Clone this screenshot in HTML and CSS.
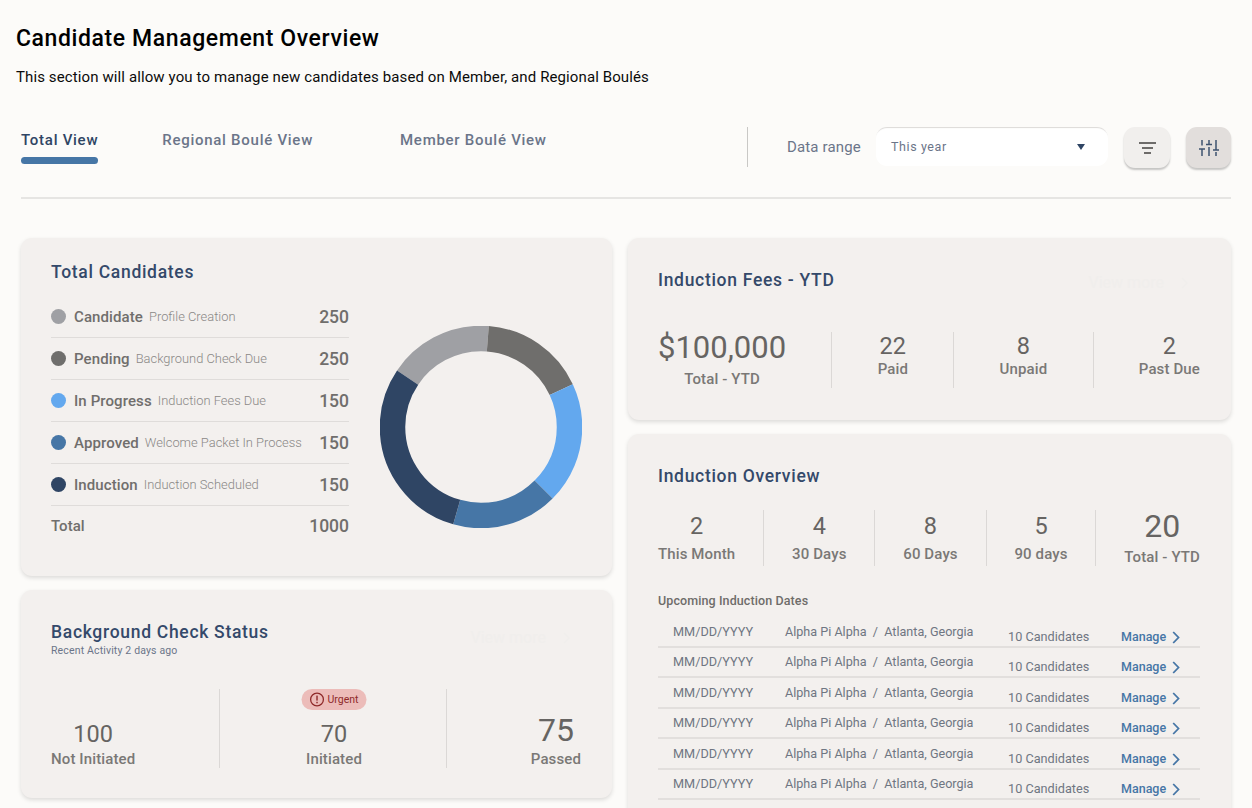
FILE: index.html
```html
<!DOCTYPE html>
<html lang="en">
<head>
<meta charset="utf-8">
<title>Candidate Management Overview</title>
<link rel="stylesheet" href="styles.css">
</head>
<body>
<main class="page">
  <header class="head">
    <h1>Candidate Management Overview</h1>
    <p>This section will allow you to manage new candidates based on Member, and Regional Boulés</p>
  </header>
  <nav class="toolbar">
    <div class="tabs">
      <a class="tab tab-active">Total View</a>
      <a class="tab tab-regional">Regional Boulé View</a>
      <a class="tab tab-member">Member Boulé View</a>
    </div>
    <div class="controls">
      <span class="range-label">Data range</span>
      <div class="select"><span>This year</span>
        <svg width="8" height="6" viewBox="0 0 8 6"><polygon points="0,0 8,0 4,6" fill="#2f4564"/></svg>
      </div>
      <button class="icon-btn">
        <svg width="17" height="14" viewBox="0 0 17 14"><g stroke="#6e6c6a" stroke-width="2"><line x1="0" y1="2" x2="17" y2="2"/><line x1="3" y1="7" x2="14" y2="7"/><line x1="5" y1="12" x2="12" y2="12"/></g></svg>
      </button>
      <button class="icon-btn icon-btn-on">
        <svg width="20" height="16" viewBox="0 0 20 16"><g stroke="#3d526f" stroke-width="1.5" fill="none"><line x1="3" y1="0" x2="3" y2="5.5"/><line x1="0" y1="9" x2="6" y2="9"/><line x1="3" y1="9" x2="3" y2="16"/><line x1="10" y1="0" x2="10" y2="4.5"/><line x1="7" y1="4.5" x2="13" y2="4.5"/><line x1="10" y1="7" x2="10" y2="16"/><line x1="17" y1="0" x2="17" y2="10"/><line x1="14" y1="10" x2="20" y2="10"/><line x1="17" y1="12" x2="17" y2="16"/></g></svg>
      </button>
    </div>
  </nav>

  <div class="grid">
    <div class="col">
      <section class="card card-total">
        <h2>Total Candidates</h2>
        <div class="total-body">
          <div class="legend">
            <div class="legend-row"><i class="dot c-gray"></i><b>Candidate</b><span>Profile Creation</span><em>250</em></div>
            <div class="legend-row"><i class="dot c-dark"></i><b>Pending</b><span>Background Check Due</span><em>250</em></div>
            <div class="legend-row"><i class="dot c-light"></i><b>In Progress</b><span>Induction Fees Due</span><em>150</em></div>
            <div class="legend-row"><i class="dot c-blue"></i><b>Approved</b><span>Welcome Packet In Process</span><em>150</em></div>
            <div class="legend-row"><i class="dot c-navy"></i><b>Induction</b><span>Induction Scheduled</span><em>150</em></div>
            <div class="legend-row legend-total"><strong>Total</strong><em>1000</em></div>
          </div>
          <svg class="donut" width="202" height="202" viewBox="0 0 202 202">
            <g fill="none" stroke-width="25.5" transform="rotate(-90 101 101)">
              <circle cx="101" cy="101" r="88.5" pathLength="360" stroke="#9fa0a4" stroke-dasharray="60.5 299.5" stroke-dashoffset="-304"/>
              <circle cx="101" cy="101" r="88.5" pathLength="360" stroke="#6f6e6c" stroke-dasharray="60.5 299.5" stroke-dashoffset="-4.5"/>
              <circle cx="101" cy="101" r="88.5" pathLength="360" stroke="#63a8ee" stroke-dasharray="70 290" stroke-dashoffset="-65"/>
              <circle cx="101" cy="101" r="88.5" pathLength="360" stroke="#4676a6" stroke-dasharray="61 299" stroke-dashoffset="-135"/>
              <circle cx="101" cy="101" r="88.5" pathLength="360" stroke="#2f4564" stroke-dasharray="108 252" stroke-dashoffset="-196"/>
            </g>
          </svg>
        </div>
      </section>

      <section class="card card-bg">
        <div class="title-row">
          <div>
            <h2>Background Check Status</h2>
            <p class="recent">Recent Activity <span>2 days ago</span></p>
          </div>
          <a class="ghost">View more <svg width="7" height="12" viewBox="0 0 7 12"><path d="M1 1l5 5-5 5" fill="none" stroke="currentColor" stroke-width="1.5"/></svg></a>
        </div>
        <div class="stats stats-bg">
          <div class="stat"><strong class="num">100</strong><span class="lab">Not Initiated</span></div>
          <i class="vr"></i>
          <div class="stat stat-flag">
            <span class="badge">
              <svg width="15" height="15" viewBox="0 0 15 15"><circle cx="7.5" cy="7.5" r="6.4" fill="none" stroke="#8f2a2a" stroke-width="1.3"/><rect x="6.8" y="3.6" width="1.4" height="5" fill="#8f2a2a"/><rect x="6.8" y="9.8" width="1.4" height="1.5" fill="#8f2a2a"/></svg>
              Urgent</span>
            <strong class="num">70</strong><span class="lab">Initiated</span>
          </div>
          <i class="vr"></i>
          <div class="stat"><strong class="num num-lg">75</strong><span class="lab">Passed</span></div>
        </div>
      </section>
    </div>

    <div class="col">
      <section class="card card-fees">
        <div class="title-row">
          <h2>Induction Fees - YTD</h2>
          <a class="ghost">View more <svg width="7" height="12" viewBox="0 0 7 12"><path d="M1 1l5 5-5 5" fill="none" stroke="currentColor" stroke-width="1.5"/></svg></a>
        </div>
        <div class="stats stats-fees">
          <div class="stat stat-money"><strong class="num num-lg">$100,000</strong><span class="lab">Total - YTD</span></div>
          <i class="vr"></i>
          <div class="stat"><strong class="num">22</strong><span class="lab">Paid</span></div>
          <i class="vr"></i>
          <div class="stat"><strong class="num">8</strong><span class="lab">Unpaid</span></div>
          <i class="vr"></i>
          <div class="stat"><strong class="num">2</strong><span class="lab">Past Due</span></div>
        </div>
      </section>

      <section class="card card-over">
        <h2>Induction Overview</h2>
        <div class="stats stats-over">
          <div class="stat"><strong class="num">2</strong><span class="lab">This Month</span></div>
          <i class="vr"></i>
          <div class="stat"><strong class="num">4</strong><span class="lab">30 Days</span></div>
          <i class="vr"></i>
          <div class="stat"><strong class="num">8</strong><span class="lab">60 Days</span></div>
          <i class="vr"></i>
          <div class="stat"><strong class="num">5</strong><span class="lab">90 days</span></div>
          <i class="vr"></i>
          <div class="stat stat-ytd"><strong class="num num-lg">20</strong><span class="lab">Total - YTD</span></div>
        </div>
        <h3>Upcoming Induction Dates</h3>
        <div class="dates">
          <div class="date-row"><span class="d-date">MM/DD/YYYY</span><span class="d-place">Alpha Pi Alpha&nbsp; /&nbsp; Atlanta, Georgia</span><span class="d-count">10 Candidates</span><a class="d-link">Manage <svg width="8" height="13" viewBox="0 0 8 13"><path d="M1.2 1l5.3 5.5-5.3 5.5" fill="none" stroke="#4676a6" stroke-width="1.8"/></svg></a></div>
          <div class="date-row"><span class="d-date">MM/DD/YYYY</span><span class="d-place">Alpha Pi Alpha&nbsp; /&nbsp; Atlanta, Georgia</span><span class="d-count">10 Candidates</span><a class="d-link">Manage <svg width="8" height="13" viewBox="0 0 8 13"><path d="M1.2 1l5.3 5.5-5.3 5.5" fill="none" stroke="#4676a6" stroke-width="1.8"/></svg></a></div>
          <div class="date-row"><span class="d-date">MM/DD/YYYY</span><span class="d-place">Alpha Pi Alpha&nbsp; /&nbsp; Atlanta, Georgia</span><span class="d-count">10 Candidates</span><a class="d-link">Manage <svg width="8" height="13" viewBox="0 0 8 13"><path d="M1.2 1l5.3 5.5-5.3 5.5" fill="none" stroke="#4676a6" stroke-width="1.8"/></svg></a></div>
          <div class="date-row"><span class="d-date">MM/DD/YYYY</span><span class="d-place">Alpha Pi Alpha&nbsp; /&nbsp; Atlanta, Georgia</span><span class="d-count">10 Candidates</span><a class="d-link">Manage <svg width="8" height="13" viewBox="0 0 8 13"><path d="M1.2 1l5.3 5.5-5.3 5.5" fill="none" stroke="#4676a6" stroke-width="1.8"/></svg></a></div>
          <div class="date-row"><span class="d-date">MM/DD/YYYY</span><span class="d-place">Alpha Pi Alpha&nbsp; /&nbsp; Atlanta, Georgia</span><span class="d-count">10 Candidates</span><a class="d-link">Manage <svg width="8" height="13" viewBox="0 0 8 13"><path d="M1.2 1l5.3 5.5-5.3 5.5" fill="none" stroke="#4676a6" stroke-width="1.8"/></svg></a></div>
          <div class="date-row"><span class="d-date">MM/DD/YYYY</span><span class="d-place">Alpha Pi Alpha&nbsp; /&nbsp; Atlanta, Georgia</span><span class="d-count">10 Candidates</span><a class="d-link">Manage <svg width="8" height="13" viewBox="0 0 8 13"><path d="M1.2 1l5.3 5.5-5.3 5.5" fill="none" stroke="#4676a6" stroke-width="1.8"/></svg></a></div>
        </div>
      </section>
    </div>
  </div>
</main>
</body>
</html>
```

FILE: styles.css
```css
* { box-sizing: border-box; }
html, body { margin: 0; height: 808px; overflow: hidden; }
body { background: #fcfbf9; font-family: Roboto, "Liberation Sans", sans-serif; color: #6e6c6a; }
h1, h2, h3, p { margin: 0; }

.page { padding: 25px 21px 0; }

.head { margin-left: -5px; }
.head h1 { font-size: 23px; line-height: 28px; font-weight: 500; letter-spacing: .6px; color: #000; }
.head p { margin-top: 15px; font-size: 15px; line-height: 18px; letter-spacing: .11px; color: #0b0b0b; }

.toolbar { display: flex; margin-top: 41px; height: 72px; border-bottom: 2px solid #e6e5e3; }
.tabs { display: flex; width: 727px; height: 40px; border-right: 1px solid #c9c8c6; }
.tab { display: block; height: 37px; font-size: 15px; line-height: 26px; font-weight: 500; letter-spacing: .73px; color: #6b7589; white-space: nowrap; }
.tab-active { color: #2f4564; position: relative; }
.tab-active::after { content: ""; position: absolute; left: 0; right: 0; bottom: 0; height: 7px; border-radius: 4px; background: #4676a6; }
.tab-regional { margin-left: 64px; }
.tab-member { margin-left: 87px; }

.controls { display: flex; align-items: flex-start; flex: 1; padding-left: 39px; }
.range-label { font-size: 15px; line-height: 40px; letter-spacing: .15px; color: #6b7589; width: 89px; white-space: nowrap; }
.select { display: flex; align-items: center; justify-content: space-between; width: 232px; height: 39px; padding: 0 23px 0 15px; background: #fff; border-radius: 11px; box-shadow: inset 0 2px 1px -1px #dcdad8; font-size: 12.5px; letter-spacing: .6px; color: #6b7589; }
.icon-btn { display: flex; align-items: center; justify-content: center; width: 46px; height: 41px; margin-left: 16px; padding: 0; border: 0; border-radius: 11px; background: #f1efed; box-shadow: 0 2px 2px rgba(0,0,0,.22); }
.icon-btn-on { background: #e2dedc; width: 45px; }

.grid { display: grid; grid-template-columns: 591px 603px; gap: 16px; margin-top: 39px; }
.col { display: flex; flex-direction: column; gap: 14px; }
.card { background: #f3f0ee; border-radius: 11px; box-shadow: 0 2px 4px rgba(0,0,0,.13); padding: 0 31px 0 30px; }
.card h2 { font-size: 17.5px; line-height: 20px; font-weight: 500; letter-spacing: .7px; color: #34496a; white-space: nowrap; }

.card-total { height: 338px; padding-top: 24px; }
.total-body { display: flex; align-items: flex-start; gap: 31px; margin-top: 14px; }
.legend { width: 298px; flex: none; }
.legend-row { display: flex; align-items: center; height: 42px; border-bottom: 1px solid #dfdcda; }
.legend-row b { font-size: 15px; font-weight: 500; letter-spacing: .1px; color: #706e6c; }
.legend-row span { margin-left: 6px; font-size: 12.9px; font-weight: 300; color: #8a8886; white-space: nowrap; }
.legend-row em { margin-left: auto; font-style: normal; font-size: 17.5px; font-weight: 500; color: #706e6c; }
.legend-total { height: 40px; border-bottom: 0; }
.legend-total strong { font-size: 15px; font-weight: 500; color: #706e6c; }
.dot { width: 15px; height: 15px; border-radius: 50%; margin-right: 8px; flex: none; }
.c-gray { background: #9fa0a4; }
.c-dark { background: #6f6e6c; }
.c-light { background: #63a8ee; }
.c-blue { background: #4676a6; }
.c-navy { background: #2f4564; }
.donut { flex: none; margin-top: 30px; }

.title-row { display: flex; justify-content: space-between; }
.ghost { display: flex; align-items: center; gap: 17px; font-size: 16px; line-height: 18px; height: 18px; color: #f0eeec; white-space: nowrap; }

.stats { display: flex; justify-content: space-between; }
.stat { display: flex; flex-direction: column; align-items: center; justify-content: flex-end; }
.vr { width: 1px; background: #dbd8d6; flex: none; }
.num { font-weight: 400; font-size: 23.5px; line-height: 28px; color: #666462; }
.num-lg { font-size: 32px; line-height: 36px; }
.lab { font-size: 15px; line-height: 18px; font-weight: 500; letter-spacing: .12px; color: #7a7876; white-space: nowrap; }

.card-bg { height: 208px; padding-top: 32px; }
.recent { font-size: 10.5px; line-height: 12px; margin-top: 3px; letter-spacing: .15px; color: #6b7589; }
.card-bg .ghost { margin-top: -1px; padding-right: 11px; position: relative; top: 8px; }
.stats-bg { height: 79px; margin-top: 32px; }
.stats-bg .num { margin-bottom: 2px; }
.stat-flag { position: relative; margin-left: 2px; }
.badge { position: absolute; top: 0; left: 50%; transform: translateX(-50%); display: flex; align-items: center; gap: 3px; height: 21px; padding: 0 8px; border-radius: 11px; background: #ecbcb9; color: #8f2a2a; font-size: 10.5px; white-space: nowrap; }

.card-fees { height: 182px; padding-top: 32px; }
.card-fees .ghost { margin-top: 4px; padding-right: 12px; }
.stats-fees { height: 56px; margin-top: 40px; }
.stats-fees .stat { justify-content: flex-start; }
.stat-money .num { font-size: 31px; line-height: 32px; }
.stat-money .lab { margin-top: 6px; }

.card-over { height: 420px; padding-top: 32px; }
.stats-over { height: 56px; margin-top: 24px; }
.stats-over .stat { justify-content: flex-start; padding-top: 1px; }
.stats-over .num { line-height: 30px; }
.stats-over .lab { margin-top: 4px; }
.stats-over .stat-ytd .lab { margin-top: 7px; }
.card-over h3 { margin-top: 27px; font-size: 12.5px; line-height: 16px; font-weight: 500; letter-spacing: .1px; color: #6e6c6a; }

.dates { margin-top: 8px; }
.date-row { display: grid; grid-template-columns: 112px 222px 114px 94px; height: 30.4px; font-size: 12.7px; color: #6f7682; }
.date-row > * { display: flex; align-items: center; padding-left: 15px; border-bottom: 2px solid #e2dfdd; white-space: nowrap; }
.d-place { height: 31px; font-size: 12.6px; }
.d-count { align-items: flex-end !important; padding-bottom: 2px; padding-left: 16px !important; }
.d-link { align-items: flex-end !important; padding-bottom: 2px; gap: 6px; font-size: 12.5px; font-weight: 500; color: #4676a6; }
```
